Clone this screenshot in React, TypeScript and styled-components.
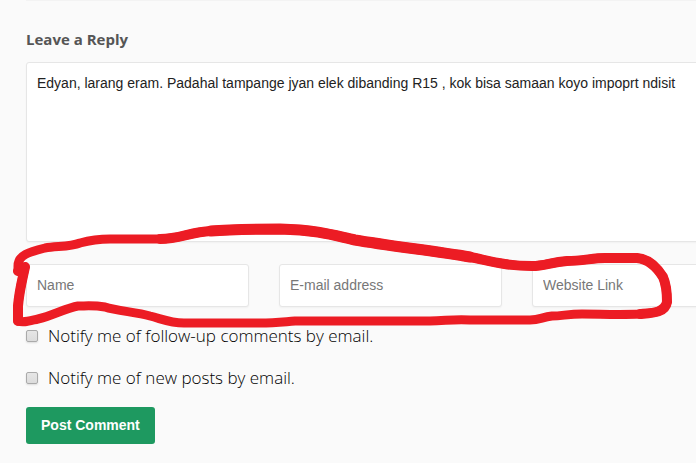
import React from 'react';
import styled, { createGlobalStyle } from 'styled-components';

const GlobalStyle = createGlobalStyle`
  *, *::before, *::after { box-sizing: border-box; }
  body {
    margin: 0;
    background: #fafafa;
    color: #222;
    font-family: "Open Sans", sans-serif;
    overflow: hidden;
  }
`;

const Page = styled.main`
  position: relative;
  min-height: 100vh;
  padding-left: 26px;
  overflow: hidden;
`;

const Divider = styled.hr`
  height: 1px;
  margin: 0;
  border: 0;
  background: #f3f3f3;
`;

/* The form is wider than the window and runs off its right edge. */
const Form = styled.form`
  display: flex;
  flex-direction: column;
  align-items: stretch;
  margin-right: -59px;
  padding-top: 27px;
`;

const Title = styled.h3`
  margin: 0 0 12px;
  color: #555;
  font-size: 15px;
  line-height: 22px;
  font-weight: 700;
`;

const Message = styled.textarea`
  display: block;
  width: 100%;
  height: 180px;
  padding: 10px;
  border: 1px solid #e6e6e6;
  border-radius: 3px;
  background: #fff;
  box-shadow: 0 1px 2px rgba(0, 0, 0, 0.04);
  color: #222;
  font: 14px/20px "Liberation Sans", Arial, sans-serif;
  resize: none;
  outline: none;
`;

const Fields = styled.div`
  display: grid;
  grid-template-columns: repeat(3, 1fr);
  gap: 30px;
  margin: 22px 0 17px;
`;

const TextField = styled.input`
  width: 100%;
  height: 43px;
  padding: 0 10px 2px;
  border: 1px solid #e6e6e6;
  border-radius: 3px;
  background: #fff;
  box-shadow: 0 1px 2px rgba(0, 0, 0, 0.04);
  font: 14px/20px "Liberation Sans", Arial, sans-serif;
  outline: none;

  &::placeholder { color: #777; opacity: 1; }
`;

const Options = styled.div`
  display: flex;
  flex-direction: column;
  gap: 18px;
  margin-bottom: 17px;
`;

const Option = styled.label`
  display: flex;
  align-items: center;
  gap: 10px;
  height: 24px;
  color: #000;
  font-size: 17px;
  line-height: 24px;
  font-weight: 300;
`;

const Tick = styled.input`
  appearance: none;
  flex: none;
  width: 12px;
  height: 12px;
  margin: 0;
  border: 1px solid #aaa;
  border-radius: 2px;
  background: linear-gradient(#e6e6e6, #dcdcdc);
  box-shadow: 0 1px 2px rgba(0, 0, 0, 0.12);

  &:checked { background: #1e9960; }
`;

const Submit = styled.button`
  align-self: flex-start;
  height: 37px;
  margin-bottom: 18px;
  padding: 0 15px 2px;
  border: 0;
  border-radius: 3px;
  background: #1e9960;
  color: #fff;
  font: 700 14px/20px "Liberation Sans", Arial, sans-serif;
`;

const Marker = styled.svg`
  position: absolute;
  top: 222px;
  left: 12px;
  pointer-events: none;
`;

function PenMark() {
  return (
    <Marker width="662" height="108" viewBox="12 222 662 108" aria-hidden="true">
      <g fill="none" stroke="#ec1c24" strokeWidth="9" strokeLinecap="round" strokeLinejoin="round">
        <path d="M18 270 V266 C18 255 29 252 45 248 C57 246 70 247 80 243 C91 240 97 239 110 239 H160 C180 239 190 232 211 231 C231 229 257 229 280 229 C320 230 336 236 355 240 C390 246 435 251 470 257 C490 261 505 266 532 266 C545 266 551 262 567 261 C582 261 593 258 605 258 H637 C650 259 658 269 663 277 C667 286 667 294 667 302 C665 313 652 313 640 314 C620 315 600 314 582 314 C568 314 562 316 552 316 C542 317 540 320 530 320 H470 C452 319 445 321 430 321 H295 C282 322 275 323 260 323 H184 C170 323 162 319 150 316 C136 312 117 311 105 307 C93 305 86 306 78 306 C66 308 52 316 38 319 C29 321 23 323 18 321 V306 C19 294 21 285 23 276 L25 267 L18 271" />
        <path strokeWidth="10" d="M160 239 C180 239 190 232 211 231 C231 229 257 229 280 229 C320 230 336 236 355 240 C390 246 435 251 470 257 C490 261 505 266 532 266 C545 266 551 262 567 261 C582 261 593 258 605 258 H637 C650 259 658 269 663 277 C667 286 667 294 667 302 C665 313 652 313 640 314" />
        <path strokeWidth="11" d="M211 231 C231 229 257 229 280 229 C320 230 336 236 355 240 C390 246 435 251 470 257" />
        <path strokeWidth="10" d="M18 321 V306 C19 294 21 285 23 276 L25 267 L18 271" />
      </g>
    </Marker>
  );
}

const fields = [
  { name: 'author', type: 'text', label: 'Name' },
  { name: 'email', type: 'email', label: 'E-mail address' },
  { name: 'url', type: 'url', label: 'Website Link' },
];

const options = [
  { name: 'comments', label: 'Notify me of follow-up comments by email.' },
  { name: 'posts', label: 'Notify me of new posts by email.' },
];

export default function App() {
  return (
    <>
      <GlobalStyle />
      <Page>
        <Divider />
        <Form onSubmit={(event: React.FormEvent) => event.preventDefault()}>
          <Title id="reply-title">Leave a Reply</Title>
          <Message
            aria-labelledby="reply-title"
            spellCheck={false}
            defaultValue="Edyan, larang eram. Padahal tampange jyan elek dibanding R15 , kok bisa samaan koyo impoprt ndisit"
          />
          <Fields>
            {fields.map((field) => (
              <TextField
                key={field.name}
                name={field.name}
                type={field.type}
                placeholder={field.label}
                aria-label={field.label}
              />
            ))}
          </Fields>
          <Options>
            {options.map((option) => (
              <Option key={option.name}>
                <Tick type="checkbox" name={option.name} />
                {option.label}
              </Option>
            ))}
          </Options>
          <Submit type="submit">Post Comment</Submit>
        </Form>
        <PenMark />
      </Page>
    </>
  );
}
